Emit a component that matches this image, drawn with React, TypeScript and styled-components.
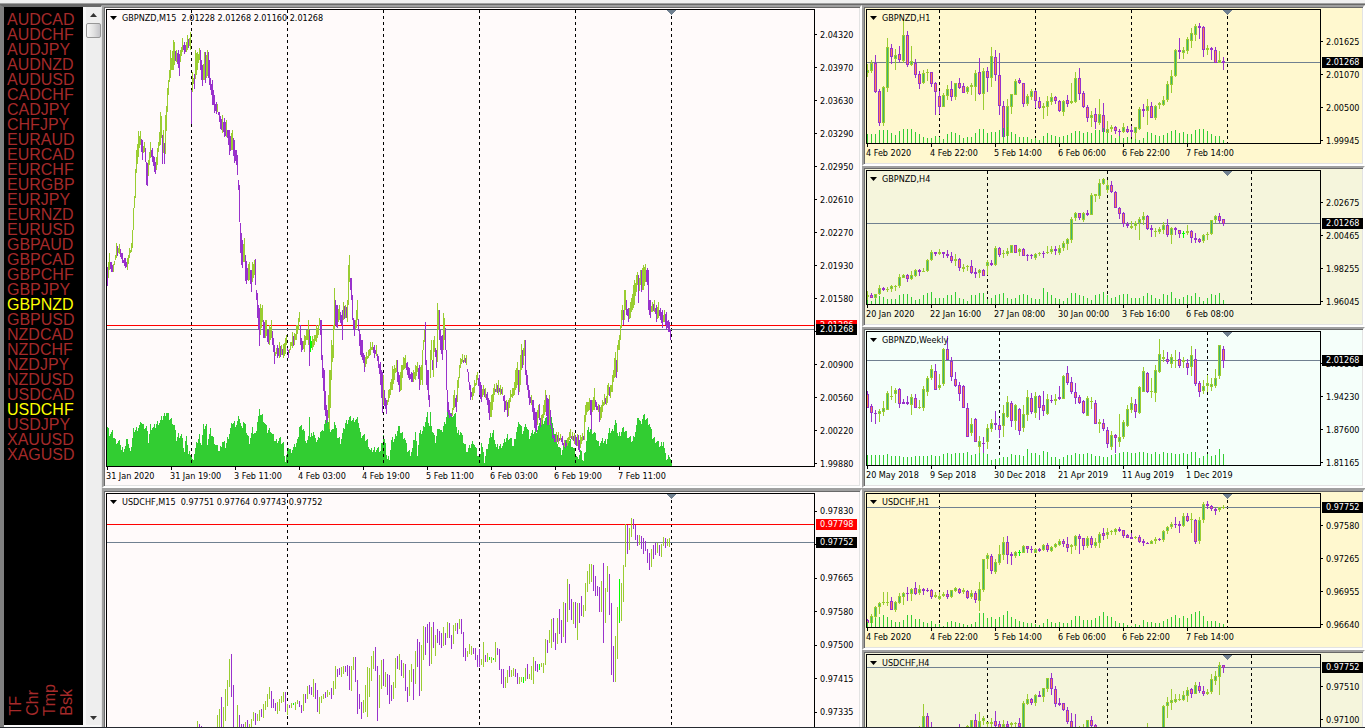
import React from "react";
import styled, { createGlobalStyle, css } from "styled-components";

const UP = "#9acd32";
const DOWN = "#9932cc";
const DOJI = "#00ff00";
const VOLUME = "#32cd32";
const PRICE_LINE = "#708090";

const GlobalStyle = createGlobalStyle`
  * { box-sizing: border-box; }
  body {
    margin: 0;
    background: #f0f0f0;
    color: #000;
    font: 9px/12px "DejaVu Sans Condensed", "DejaVu Sans", sans-serif;
  }
`;

/* ---------- data ---------- */

type Tone = "g" | "p" | "l";
const toneColor: Record<Tone, string> = { g: UP, p: DOWN, l: DOJI };

// Each candle: high, body top, body bottom, low (in thirds of a pixel) and tone.
const gbpH1 = `193,210,220,230g 180,190,212,219g 165,190,275,279p 266,273,368,378p 258,261,368,378g 114,141,264,275g
132,144,170,192p 146,165,176,209g 137,163,180,185p 57,105,182,188g 93,105,195,200p 138,182,195,197g 178,190,224,235p
213,222,251,266p 209,219,249,252g 207,215,220,243g 215,217,251,261p 245,250,276,344p 272,288,322,342p 280,284,322,322g
255,267,287,300g 243,266,290,302p 248,249,290,299g 234,249,264,267p 248,258,278,278p 257,261,276,282g 248,256,262,285g
211,219,261,302g 174,215,282,286p 204,213,281,329g 200,214,234,276p 141,168,234,262g 150,170,225,243p 159,225,318,345p
303,318,410,413p 298,317,408,411g 282,283,322,342g 237,243,284,284g 234,240,250,251p 249,249,313,320p 283,287,313,317g
267,273,290,300g 271,272,303,323p 290,303,323,327p 309,318,324,356g 288,302,321,349g 279,290,305,314g 288,291,302,312p
299,303,334,337p 299,303,336,349g 285,300,312,322p 249,303,310,313g 217,234,305,308g 204,235,282,300p 273,280,322,325p
314,321,355,366p 333,344,355,380g 323,343,367,388p 296,343,370,375g 309,345,397,400p 364,388,398,400g 375,381,388,395g
378,381,393,402p 388,393,395,411p 370,380,395,400g 378,387,395,398p 377,389,396,410p 380,380,400,418g 322,327,387,390g
312,326,332,351p 297,318,332,375g 307,318,353,354p 315,318,353,360g 305,309,316,327g 288,300,314,317g 243,252,300,305g
210,228,254,279g 148,150,228,230g 114,150,157,177p 141,150,158,178g 111,117,152,162g 84,99,122,144g 72,78,104,123g
69,78,84,117p 78,81,150,171p 135,144,150,165g 141,143,150,180p 141,150,188,189p 153,181,188,190g 171,183,188,210p`;

const gbpH4 = `378,390,397,405g 384,390,399,400p 388,388,400,410g 360,370,388,390g 365,370,375,378p 366,371,375,381g
360,363,373,381g 360,362,364,378g 328,336,362,370g 326,330,338,340g 326,330,342,350p 318,330,342,344g 311,315,333,336g
312,315,321,333p 308,318,320,322g 283,286,318,320g 255,262,286,288g 261,262,266,273p 253,261,266,270g 261,262,268,279p
255,267,274,278p 261,273,288,294p 267,283,288,303g 280,283,308,318p 297,306,313,320g 300,304,307,318g 286,303,324,328p
308,320,326,339p 312,315,324,339g 312,316,332,334p 285,292,304,330g 285,294,300,303p 244,250,300,302g 247,250,270,275p
255,263,268,280g 250,258,266,272g 240,241,263,265g 240,241,264,264p 249,252,262,273g 250,252,272,273p 268,270,272,288p
268,270,272,282p 264,268,278,284g 260,264,268,272g 258,264,266,279p 244,262,265,267g 243,252,262,266g 243,252,258,270p
240,249,265,270g 228,234,249,258g 220,222,236,255g 156,162,224,234g 141,144,160,167g 144,144,158,164p 141,144,165,171g
135,144,150,152p 85,90,150,150g 87,88,92,111g 42,54,92,102g 39,42,56,60g 45,61,75,85g 48,60,80,84p 78,80,128,129p
125,128,147,162p 141,145,177,186p 171,177,183,189p 168,183,188,192g 168,173,183,195g 155,163,175,225g 141,153,165,180g
150,153,191,195p 180,190,196,215p 188,198,202,215g 186,192,202,208g 171,179,194,208g 162,180,209,215p 186,188,209,237g
186,190,196,209p 195,196,206,218p 198,204,206,218l 180,199,204,210g 195,198,220,234p 204,220,224,233p 220,221,232,234p
208,210,228,234g 200,206,210,225g 165,166,208,210g 150,153,166,174g 144,153,167,174p 162,163,176,182p`;

const gbpWeekly = `198,207,248,250p 237,243,264,291p 255,264,267,297p 252,259,268,290g 228,249,260,273g 198,204,254,256g
183,213,215,225g 190,195,207,234g 190,193,236,249p 222,231,236,238p 213,231,237,240p 207,215,240,270g 208,218,248,249p
224,246,249,251g 183,193,249,257g 152,159,200,212g 120,132,160,165g 117,138,194,195p 147,180,188,194g 69,72,177,183g
34,72,104,106p 96,107,156,168p 140,163,182,185p 170,180,206,227p 180,183,248,249p 235,248,335,336p 279,296,324,333g
280,283,350,351p 332,347,366,386g 336,353,356,384p 297,309,350,372g 282,294,312,320g 258,293,299,315p 279,299,315,338p
240,264,304,336g 213,231,275,279g 228,233,288,305p 237,240,288,315g 249,252,317,330p 240,267,308,320g 195,216,270,287g
203,219,261,266p 200,213,265,280g 210,213,248,285p 197,241,258,273p 207,222,267,270g 210,225,228,234p 207,221,227,240g
183,216,222,224p 150,153,221,222g 123,144,174,180p 156,171,202,208p 174,202,219,236p 210,217,234,237p 225,227,264,266p
213,219,273,274g 216,228,230,252g 225,234,297,298p 282,292,296,324g 282,294,312,318p 306,314,358,368p 318,329,365,374g
327,330,338,384p 267,336,350,366g 285,291,335,342g 240,251,303,306g 215,234,256,264g 222,237,261,279p 183,186,264,266g
126,138,200,200g 141,144,201,204p 159,198,202,218g 120,135,204,231g 42,87,141,144g 75,97,102,110g 80,102,111,117p
87,97,116,129g 75,105,107,129g 81,102,123,130p 96,105,110,129g 102,115,129,150p 63,90,126,153g 72,102,178,182p
168,174,202,216p 165,183,198,208g 150,174,184,200g 160,176,186,198g 132,160,184,190g 60,61,154,162g 63,72,107,129p`;

const chfH1 = `402,404,413,415p 387,393,414,416g 362,366,396,407g 352,354,367,388g 321,350,353,360g 321,350,352,362g
336,348,374,376p 348,352,374,380g 323,333,354,356g 322,325,336,360g 306,324,328,347p 309,312,328,348g 291,309,327,329p
300,313,325,330g 308,312,318,330p 309,314,317,321p 313,316,336,342p 322,330,336,338g 320,333,343,345g 322,327,334,336g
315,327,336,342p 314,316,336,338g 305,309,317,321g 309,311,324,327p 309,316,321,327g 315,318,339,342p 316,323,336,342g
318,324,346,354p 291,313,347,377g 222,222,315,320g 204,211,223,251g 207,213,258,267p 222,231,260,266g 180,208,234,239g
155,172,210,226g 153,172,210,237p 201,207,212,240p 198,202,214,220g 195,200,205,212l 180,183,203,204g 182,183,193,204p
183,192,196,204p 188,192,203,204g 190,191,197,200p 177,180,195,197g 174,180,196,200p 182,185,198,200g 174,178,186,190g
162,168,180,183g 162,168,178,186p 155,177,188,200p 178,180,186,207g 150,153,183,195g 147,154,162,207p 158,159,183,195p
153,158,182,190g 153,158,181,188p 160,171,182,190g 141,147,174,188g 129,144,153,165p 129,141,150,162g 135,138,142,150g
130,132,140,150g 126,133,138,140p 135,136,152,160p 148,150,158,160p 143,155,161,163p 153,156,160,162g 150,156,171,174p
162,168,174,183p 171,173,177,178p 165,167,176,177g 155,162,168,177g 158,162,165,168p 135,138,165,170g 123,126,138,147g
111,117,126,132g 96,117,120,130p 108,118,122,143p 84,93,123,127g 84,93,108,111p 84,102,106,145g 102,104,171,177p
96,105,168,177g 51,57,105,113g 48,57,62,72p 60,63,72,78p 69,72,77,90p 66,67,74,80g 60,65,68,72g`;

const chfH4 = `- - - - - - - - - - - - - 723,726,800,800g 657,693,800,800g 684,693,800,800p 711,725,800,800p - - - - - -
717,726,800,800p - 720,722,800,800g 705,706,800,800g 687,706,800,800p 681,708,800,800g 693,699,709,720g 710,712,716,726g
699,711,716,800g 678,708,722,726p 708,718,800,800p 706,717,726,800g 709,717,726,800p 712,715,720,800g 710,714,718,800g
699,713,726,800p 648,654,800,800g 627,642,656,661g 639,642,653,660p 627,630,653,662g 618,630,635,636p 608,610,635,650g
578,580,612,620g 563,580,612,630p 603,612,656,666p 640,654,659,662p 653,655,676,678p 666,675,710,718p 684,708,800,800p
687,726,800,800p 723,726,800,800g 717,726,800,800g 704,706,800,800g 693,706,722,728p 717,720,800,800p - - - - - - - - - - - -
714,728,800,800g - - - 661,664,800,800g 636,652,662,699g 612,645,653,675g 628,643,650,655g 628,642,646,648g
618,630,645,647g 606,614,632,651g 610,613,626,640p 591,600,626,628g 591,602,617,623p 603,617,626,632p 613,620,627,630g
567,582,620,626g 558,573,588,600g 530,541,575,630g 540,541,548,563p`;

const list = (s: string) => s.trim().split(/\s+/).map(Number);

const gbpH1Vol = list(`9 9 9 13 13 13 10 8 12 14 14 14 11 9 6 5 5 7 6 4 9 11 10 8 5 6 6 10 14 14 10 11 11 13 15 16 11 9 6 6 6 4
5 3 7 10 8 7 6 7 8 10 12 12 10 11 10 13 13 15 10 8 5 7 5 6 4 4 3 5 11 10 8 7 8 10 12 13 10 11 9 9 13 14 14 12 9 7 7 3 3`);
const gbpH4Vol = list(`4 3 5 8 7 5 5 5 9 10 10 7 4 5 9 11 12 6 6 6 9 9 12 6 5 3 9 9 11 11 5 6 9 10 11 6 5 6 9 10 9 6 5 5 16 12 9 6
5 3 6 11 11 9 8 6 4 9 10 12 9 6 7 9 10 10 6 6 6 8 11 9 6 5 10 9 12 6 5 7 9 8 11 7 3 6 10 9 11 4`);
const gbpWeeklyVol = list(`10 10 10 10 10 11 9 9 9 8 8 8 9 9 9 9 10 9 9 11 12 11 12 12 12 13 10 11 12 12 11 5 6 7 8 8 11 10 10 9
16 12 12 10 14 13 8 8 6 8 10 10 12 11 11 12 11 9 9 8 8 10 11 12 13 13 12 12 13 13 12 11 13 11 13 12 12 11 11 12 11 13 13 7
9 11 9 10 16 11`);
const chfH1Vol = list(`5 7 9 10 12 10 7 5 5 7 12 12 8 8 5 4 6 3 3 1 5 6 5 4 3 2 3 5 14 14 9 10 8 10 12 16 10 8 6 5 4 4 3 2 4 8 5 4
5 4 4 7 11 11 7 7 7 9 11 15 11 10 6 4 4 2 1 3 2 7 5 5 4 4 6 8 10 12 9 11 9 13 15 16 11 6 6 6 4 3`);

// GBPNZD M15 key points: x, top and bottom of the bar; points between are interpolated.
const gbpM15 = `107,267,286 109,253,270 111,262,272 113,264,272 116,243,258 119,244,254 122,253,263 125,258,268 127,258,270
129,248,258 131,243,252 132,230,248 133,208,230 134,196,208 135,169,198 136,150,173 138,131,157 140,131,145 142,140,160
144,142,152 145,148,162 146,162,185 147,163,186 149,152,165 150,142,158 152,148,162 154,157,172 155,162,174 157,148,165
158,142,152 160,112,145 161,116,138 162,135,164 163,130,153 164,143,164 165,115,154 167,88,112 168,80,95 169,70,82
170,50,78 171,58,70 173,40,70 174,42,65 176,50,62 178,50,68 179,54,76 180,50,62 182,38,52 184,42,54 186,42,52 187,35,50
189,38,46 190,32,50 191,90,124 192,72,92 193,78,84 194,74,89 195,50,79 197,52,70 199,48,60 200,50,70 201,60,80 202,65,86
204,52,80 205,52,83 207,50,76 208,52,78 209,60,85 210,78,90 212,80,105 213,90,105 214,95,113 216,102,114 217,104,112
219,112,122 220,116,129 222,115,133 224,118,137 226,120,137 228,130,145 229,130,155 231,133,150 232,130,150 234,140,163
236,150,165 237,155,175 238,180,190 239,185,222 240,223,253 241,233,265 242,240,268 244,238,262 245,255,281 246,261,284
248,264,281 249,262,280 251,270,292 252,262,282 254,260,275 255,259,285 256,290,300 257,293,318 259,308,346 260,304,335
262,305,322 263,320,338 265,320,338 266,320,336 267,330,342 269,325,345 271,320,338 273,338,352 274,345,364 276,348,354
277,345,358 279,342,358 281,345,355 283,344,358 285,338,354 286,335,345 288,350,358 290,342,350 292,332,348 294,333,345
296,325,340 298,318,330 299,312,322 300,325,345 301,338,352 304,335,352 306,330,340 308,320,345 309,330,366 310,336,352
312,336,350 314,335,345 316,325,342 318,325,335 319,318,326 320,320,335 321,320,360 322,355,378 324,370,410 326,405,423
327,410,420 328,395,418 329,370,429 330,370,408 331,340,380 332,345,362 333,325,358 334,288,330 335,300,325 337,305,328
339,305,320 341,315,325 342,310,340 343,302,320 345,305,318 347,300,322 348,265,305 349,255,282 350,278,290 351,278,300
352,295,320 353,318,330 354,320,336 356,310,328 357,300,320 359,330,346 360,334,355 362,340,360 364,355,372 366,352,364
368,350,358 370,342,355 372,342,350 374,345,358 376,345,356 378,356,368 380,362,385 382,372,413 383,375,405 384,390,406
386,400,414 388,390,402 390,382,395 392,366,390 394,365,380 396,360,372 397,360,382 399,375,392 401,365,390 403,357,370
405,355,368 407,362,375 409,368,380 411,372,382 413,370,382 415,365,380 417,362,372 419,365,390 421,365,380 422,350,385
423,340,350 424,330,342 425,322,365 426,360,385 428,370,400 429,395,407 430,350,378 431,340,360 432,360,370 433,340,377
434,336,352 436,350,368 437,303,362 438,310,330 439,310,340 440,330,350 442,335,360 443,313,350 444,318,340 445,328,350
446,350,390 447,390,412 449,410,418 452,408,416 453,395,410 454,390,408 456,395,412 457,380,402 459,365,378 460,358,368
462,354,362 464,355,362 466,355,365 468,372,382 470,385,400 472,388,400 474,380,393 476,375,385 477,372,380 479,375,395
481,385,402 483,385,395 485,388,398 487,392,405 489,400,420 491,395,417 493,388,402 494,384,395 496,383,392 498,380,395
500,385,395 502,387,395 504,395,412 506,400,410 507,402,417 508,400,416 510,390,402 512,388,398 514,382,395 515,370,390
517,362,385 518,370,395 519,370,392 520,355,385 521,344,370 522,350,368 523,348,365 524,340,356 525,340,375 526,370,385
527,375,390 529,390,405 531,395,405 532,400,412 533,400,420 534,408,428 535,412,430 536,412,432 537,410,425 538,405,418
539,404,420 540,418,427 541,415,425 543,405,418 545,390,412 546,395,416 547,398,425 549,395,425 550,410,425 552,428,438
554,435,442 556,432,442 558,432,444 560,434,440 562,436,445 564,440,447 565,440,448 567,438,446 569,432,440 570,429,438
572,432,440 574,433,444 575,435,445 577,434,446 578,435,450 579,440,452 580,435,448 582,433,441 583,436,440 584,415,440
585,405,422 586,402,415 587,402,412 589,398,410 590,400,415 591,400,430 592,400,412 594,388,410 596,402,410 598,404,412
599,405,422 601,405,418 602,400,412 604,394,405 606,396,405 607,385,403 608,383,395 610,385,398 612,375,392 613,370,382
614,358,378 615,352,377 616,360,378 617,345,372 618,340,350 619,335,350 620,325,340 621,310,328 622,305,320 623,310,325
624,290,320 625,290,310 626,300,315 628,308,322 630,302,318 631,298,312 633,285,308 634,280,305 636,275,292 637,272,285
638,275,303 640,270,285 641,270,292 642,268,290 643,265,290 645,264,282 647,268,285 648,270,310 649,300,315 650,300,318
652,302,312 654,300,312 656,305,322 658,302,318 660,308,320 662,310,328 664,310,322 666,312,330 668,320,332 669,322,332
670,330,340`;

const gbpM15Vol = `107,426 109,432 112,432 115,440 120,442 121,449 125,446 127,436 129,449 131,445 133,430 136,428 140,424
141,420 143,425 146,426 148,440 150,425 153,427 157,422 160,420 163,415 166,411 169,417 172,420 174,425 176,438 178,434
181,434 184,451 186,432 188,454 190,452 192,460 194,452 197,440 199,435 201,443 203,426 206,425 207,441 210,430 213,438
216,445 219,450 222,440 225,445 228,435 230,428 232,421 236,423 239,416 241,427 243,420 245,426 247,434 249,440 252,429
255,434 257,420 259,411 262,415 265,424 267,430 270,428 272,434 275,440 279,438 283,443 285,460 288,445 290,450 294,446
297,440 299,425 303,428 306,441 308,438 309,414 310,436 313,430 315,440 318,438 320,430 322,432 324,423 327,416 329,428
332,430 334,420 337,435 340,440 343,430 345,422 349,417 352,419 355,418 358,420 360,433 363,435 367,440 370,450 374,448
377,448 380,450 383,433 385,445 387,458 389,456 391,440 394,438 396,432 398,426 401,432 404,436 407,449 410,452 412,448
415,431 417,452 419,433 422,430 425,420 427,414 429,425 430,413 432,430 435,440 438,425 441,432 443,425 445,420 447,410
449,415 452,413 455,415 457,432 460,430 463,440 467,450 470,445 473,440 476,450 479,458 481,441 484,460 487,445 490,435
493,431 496,447 499,445 503,443 507,435 510,438 513,445 516,430 519,421 522,430 526,424 529,435 532,432 535,430 539,425
541,422 545,418 548,420 551,415 553,430 556,434 558,445 561,452 563,445 566,440 570,440 574,450 577,458 580,450 583,460
585,448 587,430 590,428 594,432 598,442 602,440 606,440 609,430 612,430 615,420 618,435 622,428 625,430 628,436 632,440
635,430 638,415 640,422 643,415 646,418 649,422 652,436 656,440 660,445 663,440 665,455 667,458 669,453 671,460`;

// USDCHF M15 bars, one every two pixels: high, low (thirds of a pixel) and tone.
const chfM15 = [
  {
    start: 90,
    shift: 198,
    bars: `483,530g 492,530p 498,530p - - - - - - - 465,530g 447,530g 411,530p 441,530g 387,483g 360,438g 297,381g 282,411p
375,530p - 435,530g 465,530p 492,530p 492,530p 486,530g 480,530p 492,530g 477,530g 456,483g 459,495p 462,483g 450,483g
447,471p 432,474g 423,450g 402,441g 381,417g 393,444p 417,444p 429,453p 426,462g 417,453g 408,429g 396,426g 396,456p
432,465g 435,444p 429,444g 429,435l 426,450g 420,432g 423,441p 435,459p 402,453g 402,429p 378,417g 375,402p 381,405p
357,411g 369,417p 390,456p 411,462g 408,429g 402,417g 396,414p 390,411g 396,405g 384,417p 363,405g 318,387g 327,351p
324,345p`,
  },
  {
    start: 234,
    shift: 318,
    bars: `201,231g 198,222g 198,216p 195,228p 198,270p 198,273g 171,210g 171,246p 240,342p 282,327p 306,357p 300,339g
255,336g 201,351g 204,291g 168,243g 153,207g 141,213p 198,363p 225,324g`,
  },
  {
    start: 274,
    shift: -12,
    bars: `510,597g 507,588p 546,591g 552,615p 555,642p 585,633p 576,627g 504,594g 498,537p 492,540g 510,558p 519,564g
522,603p 591,636p 540,618g 522,576g 537,630p 483,582g 447,531p 456,618p 465,603g 408,510g 411,495p 402,459p 396,528p
411,522g 396,474p 435,498g 417,459p 423,465p 429,474p 411,468g 429,465p 396,444g 399,444p 435,477p 405,462g 399,423g
399,432p 387,417g 387,432p 426,501p 474,513p 483,501g 462,492g 468,495g 474,492p 474,510p 495,531p 477,531p 507,525g
456,531g 495,516p 489,516g 501,510l 501,519g 504,510l 456,516g 474,495p 477,540p 537,582p 537,594p 561,594g 540,579g
528,561p 540,561g 534,558g 537,561p 549,582p 561,582g 561,576g 561,579l 534,573g 522,567p 552,567g 528,570g 501,582g
513,543p 522,546p 522,540l 519,531g 519,549g 447,525g 450,489p 420,459g 387,474g 384,456p 429,480p 384,462g 357,432p
390,459p 336,441g 339,459p 267,396g 282,360p 327,390p 336,402g 336,414p 339,450g 339,399p 318,378p 345,381g 279,363g
243,306g 222,282g 222,276g 225,303p 258,318p 288,318p 291,366p 273,366g 219,459p 294,399g 228,306g 252,375p 339,555p
468,576p 438,576g 351,507g 267,399l 279,393g 225,336g 102,231g 105,192p 114,180g 84,141g 87,117p 105,150p 135,168p
135,165g 138,177p 144,192p 153,183p 177,219p 189,240p 177,231g 165,207p 159,195p 159,189g 165,198p 162,201g 141,168g
144,174p 147,168g 144,171g`,
  },
];

const pairs = (
  "AUDCAD AUDCHF AUDJPY AUDNZD AUDUSD CADCHF CADJPY CHFJPY EURAUD EURCAD EURCHF EURGBP EURJPY EURNZD EURUSD " +
  "GBPAUD GBPCAD GBPCHF GBPJPY GBPNZD GBPUSD NZDCAD NZDCHF NZDJPY NZDUSD USDCAD USDCHF USDJPY XAUUSD XAGUSD"
).split(" ");

/* ---------- drawing ---------- */

function Candles({ data, shift }: { data: string; shift: number }) {
  const y = (v: string) => Math.round(Number(v) / 3) + shift;
  return (
    <>
      {data.trim().split(/\s+/).map((item, i) => {
        if (item === "-") return null;
        const tone = item.slice(-1) as Tone;
        const [h, t, b, l] = item.slice(0, -1).split(",").map(y);
        const size = Math.max(1, b - t);
        const x = i * 4;
        const color = toneColor[tone];
        return (
          <g key={i}>
            <rect x={x} y={h} width={1} height={Math.max(1, l - h)} fill={color} />
            <rect x={x - 1} y={t} width={3} height={size} fill={color} />
            {size > 2 && (
              <rect x={x} y={t + 1} width={1} height={size - 2} fill={tone === "g" ? "#3cb371" : "#ff7f50"} />
            )}
          </g>
        );
      })}
    </>
  );
}

function VolumeTicks({ data, floor }: { data: number[]; floor: number }) {
  return (
    <>
      {data.slice(0, 90).map((v, i) => (
        <rect key={i} x={i * 4} y={floor - v} width={1} height={v} fill={VOLUME} />
      ))}
    </>
  );
}

const points = (s: string) => s.trim().split(/\s+/).map((p) => p.split(",").map(Number));

function DenseBars() {
  const keys = points(gbpM15);
  const bars: { x: number; hi: number; lo: number }[] = [];
  keys.forEach(([x, hi, lo], i) => {
    bars.push({ x, hi, lo });
    const next = keys[i + 1];
    if (!next) return;
    for (let k = x + 1; k < next[0]; k++) {
      const f = (k - x) / (next[0] - x);
      const top = Math.round(hi + (next[1] - hi) * f) + 2 + ((k * 37) % 4);
      const bottom = Math.round(lo + (next[2] - lo) * f) - ((k * 53) % 4);
      bars.push({ x: k, hi: top, lo: Math.max(top + 3, bottom) });
    }
  });
  return (
    <>
      {bars.map((b, i) => {
        const prev = bars[i - 1] ?? { x: 0, hi: 0, lo: 0 };
        const tone: Tone = b.x === 310 || b.x === 311 ? "l" : b.hi + b.lo > prev.hi + prev.lo ? "p" : "g";
        return <rect key={b.x} x={b.x - 107} y={b.hi - 10} width={1} height={b.lo - b.hi} fill={toneColor[tone]} />;
      })}
    </>
  );
}

function DenseVolume() {
  const keys = points(gbpM15Vol);
  let d = "M0 456";
  keys.forEach(([x, top], i) => {
    const end = keys[i + 1]?.[0] ?? x + 1;
    for (let k = x; k < end; k++) {
      const f = (k - x) / (end - x);
      const y = Math.round(top + ((keys[i + 1]?.[1] ?? top) - top) * f) + ((k * 5) % 7) - 12;
      d += `V${Math.min(454, y)}H${k - 106}`;
    }
  });
  return <path d={d + "V456Z"} fill={VOLUME} />;
}

function ThinBars() {
  return (
    <>
      {chfM15.map((run) =>
        run.bars.trim().split(/\s+/).map((item, i) => {
          if (item === "-") return null;
          const [h, l] = item.slice(0, -1).split(",").map((v) => Math.round((Number(v) + run.shift) / 3));
          const x = run.start + i * 2;
          return <rect key={x} x={x} y={h} width={1} height={l - h} fill={toneColor[item.slice(-1) as Tone]} />;
        }),
      )}
    </>
  );
}

/* ---------- windows ---------- */

const Frame = styled.section<{ $bg: string; $tall?: boolean }>`
  display: grid;
  grid-template-columns: minmax(0, 1fr) ${(p) => (p.$tall ? 45 : 42)}px;
  grid-template-rows: ${(p) => (p.$tall ? 458 : 135)}px 1fr;
  height: ${(p) => (p.$tall ? 483 : 161)}px;
  flex: none;
  padding: 2px 0 0 2px;
  border: 2px solid;
  border-color: #a0a0a0 #fff #fff #a0a0a0;
  box-shadow: inset 1px 1px #696969, inset -1px -1px #e3e3e3;
  background: ${(p) => p.$bg};
  overflow: hidden;
`;

const Plot = styled.div`
  position: relative;
  border: 1px solid #000;
`;

const Canvas = styled.svg`
  display: block;
  width: 100%;
  height: 100%;
  shape-rendering: crispEdges;
`;

const Caption = styled.header`
  position: absolute;
  top: 2px;
  left: 3px;
  display: flex;
  align-items: center;
  gap: 5px;
  white-space: pre;
`;

const MenuButton = styled.button`
  display: flex;
  padding: 0;
  border: 0;
  background: none;
`;

const Title = styled.h2`
  margin: 0;
  font: inherit;
`;

const Scale = styled.ol<{ $top: number }>`
  list-style: none;
  margin: 0;
  padding: ${(p) => p.$top}px 0 0;
  position: relative;
`;

const Price = styled.li<{ $tall?: boolean }>`
  display: flex;
  align-items: center;
  gap: 3px;
  height: ${(p) => (p.$tall ? 34 : 33)}px;
  &:nth-child(even) { height: 33px; }
  &::before {
    content: "";
    width: 2px;
    height: 1px;
    background: #000;
  }
`;

const Tag = styled.li<{ $y: number; $red?: boolean }>`
  position: absolute;
  top: ${(p) => p.$y}px;
  left: 1px;
  width: 41px;
  height: 11px;
  padding-left: 4px;
  line-height: 11px;
  color: #fff;
  background: ${(p) => (p.$red ? "#f00" : "#000")};
`;

const Times = styled.ol`
  grid-column: 1 / -1;
  list-style: none;
  margin: 0;
  padding: 0;
  display: flex;
`;

const Time = styled.li`
  flex: 0 0 64px;
  white-space: nowrap;
  &::before {
    content: "";
    display: block;
    width: 1px;
    height: 3px;
    margin-left: 1px;
    background: #000;
  }
`;

type ChartProps = {
  title: string;
  bg: string;
  tall?: boolean;
  scaleTop: number;
  stretched?: boolean;
  prices: string[];
  tags: { y: number; text: string; red?: boolean }[];
  lines: { y: number; red?: boolean }[];
  seps: number[];
  shift: number;
  times?: string[];
  under?: React.ReactNode;
  children: React.ReactNode;
};

function Chart(p: ChartProps) {
  return (
    <Frame $bg={p.bg} $tall={p.tall} aria-label={p.title}>
      <Plot>
        <Canvas role="img" aria-label={`${p.title} price chart`}>
          {p.under}
          {p.seps.map((x) => (
            <line key={x} x1={x + 0.5} x2={x + 0.5} y1="0" y2="100%" stroke="#000" strokeDasharray="3 3" />
          ))}
          {p.lines.map((l) => (
            <rect key={l.y} x="0" y={l.y} width="100%" height="1" fill={l.red ? "#f00" : PRICE_LINE} />
          ))}
          {p.children}
          <path d={`M${p.shift - 4} 0h9v1h-1v1h-1v1h-1v1h-1v1h-1v-1h-1v-1h-1v-1h-1v-1h-1z`} fill={PRICE_LINE} />
        </Canvas>
        <Caption>
          <MenuButton type="button" aria-label={`${p.title} trading panel`}>
            <svg width="7" height="4" aria-hidden="true">
              <path d="M0 0h7L3.5 4z" />
            </svg>
          </MenuButton>
          <Title>{p.title}</Title>
        </Caption>
      </Plot>
      <Scale $top={p.scaleTop}>
        {p.prices.map((v) => (
          <Price key={v} $tall={p.stretched}>{v}</Price>
        ))}
        {p.tags.map((t) => (
          <Tag key={t.text} $y={t.y} $red={t.red}>{t.text}</Tag>
        ))}
      </Scale>
      {p.times && (
        <Times>
          {p.times.map((t) => (
            <Time key={t}>{t}</Time>
          ))}
        </Times>
      )}
    </Frame>
  );
}

/* ---------- page ---------- */

const Page = styled.main`
  display: grid;
  grid-template-rows: 3px minmax(0, 1fr) 1px;
  height: 100vh;
  overflow: hidden;
`;

const Strip = styled.div<{ $dark?: boolean }>`
  background: ${(p) => (p.$dark ? "#262a30" : "#f0f0f0")};
`;

const Workspace = styled.div`
  display: grid;
  grid-template-columns: 102px minmax(0, 760fr) minmax(0, 503fr);
  border-top: 1px solid #a0a0a0;
  box-shadow: inset 0 1px #696969;
  padding-top: 1px;
  min-height: 0;
`;

const Column = styled.div`
  display: flex;
  flex-direction: column;
  min-height: 0;
  overflow: hidden;
`;

const Divider = styled.div`
  flex: none;
  height: 1px;
  background: #a0a0a0;
`;

const Watch = styled.aside`
  display: grid;
  grid-template-columns: 79px 3px 15px;
  min-height: 0;
  padding: 0 0 2px;
  border: solid #a0a0a0;
  border-width: 2px 1px 0 4px;
  border-color: #696969 #e3e3e3 #fff #808080;
  background: #f8f8f8;
`;

const Panel = styled.div`
  display: flex;
  flex-direction: column;
  justify-content: space-between;
  min-height: 0;
  background: #000;
  font: 16px/15px "Liberation Sans", Arial, sans-serif;
`;

const PairList = styled.ul`
  list-style: none;
  margin: 0;
  padding: 5px 0 0 3px;
`;

const linkLike = css`
  display: block;
  padding: 0;
  border: 0;
  background: none;
  font: inherit;
  text-align: left;
`;

const PairButton = styled.button<{ $on: boolean }>`
  ${linkLike}
  color: ${(p) => (p.$on ? "#ff0" : "#a52a2a")};
`;

const Tools = styled.div`
  display: flex;
  align-items: flex-end;
  padding: 0 0 9px 3px;
`;

const Tool = styled.button`
  ${linkLike}
  color: #a52a2a;
  line-height: 17px;
  writing-mode: vertical-rl;
  transform: rotate(180deg);
`;

const ScrollBar = styled.div`
  grid-column: 3;
  display: flex;
  flex-direction: column;
  background: #eee;
`;

const Arrow = styled.button<{ $end?: boolean }>`
  display: flex;
  justify-content: center;
  align-items: center;
  height: 15px;
  padding: 0;
  border: 0;
  background: none;
  margin-top: ${(p) => (p.$end ? "auto" : "0")};
`;

const Thumb = styled.div`
  height: 15px;
  margin-top: 1px;
  border: 1px solid #979797;
  border-radius: 2px;
  background: linear-gradient(90deg, #f7f7f7, #e2e2e2 50%, #c4c4c8);
`;

const h1Times = ["4 Feb 2020", "4 Feb 22:00", "5 Feb 14:00", "6 Feb 06:00", "6 Feb 22:00", "7 Feb 14:00"];
const h4Times = ["20 Jan 2020", "22 Jan 16:00", "27 Jan 08:00", "30 Jan 00:00", "3 Feb 16:00", "6 Feb 08:00"];

export default function App() {
  return (
    <>
      <GlobalStyle />
      <Page>
        <Strip />
        <Workspace>
          <Watch aria-label="Symbols">
            <Panel>
              <PairList>
                {pairs.map((s) => (
                  <li key={s}>
                    <PairButton type="button" $on={s === "GBPNZD" || s === "USDCHF"}>{s}</PairButton>
                  </li>
                ))}
              </PairList>
              <Tools>
                {["TF", "Chr", "Tmp", "Bsk"].map((t) => (
                  <Tool type="button" key={t}>{t}</Tool>
                ))}
              </Tools>
            </Panel>
            <ScrollBar>
              <Arrow type="button" aria-label="Scroll up">
                <svg width="7" height="4" aria-hidden="true"><path d="M0 4h7L3.500 0z" fill="#333" /></svg>
              </Arrow>
              <Thumb />
              <Arrow type="button" aria-label="Scroll down" $end>
                <svg width="7" height="4" aria-hidden="true"><path d="M0 0h7L3.500 4z" fill="#333" /></svg>
              </Arrow>
            </ScrollBar>
          </Watch>

          <Column>
            <Chart
              title="GBPNZD,M15  2.01228 2.01268 2.01160 2.01268"
              bg="#fffafa"
              tall
              scaleTop={9}
              prices={["2.04320", "2.03970", "2.03630", "2.03290", "2.02950", "2.02610", "2.02270", "2.01930", "2.01580", "2.01240", "2.00900", "2.00560", "2.00220", "1.99880"]}
              tags={[{ y: 311, text: "2.01286", red: true }, { y: 315, text: "2.01268" }]}
              lines={[{ y: 315, red: true }, { y: 319 }]}
              seps={[84, 180, 276, 372, 468, 564]}
              shift={564}
              times={["31 Jan 2020", "31 Jan 19:00", "3 Feb 11:00", "4 Feb 03:00", "4 Feb 19:00", "5 Feb 11:00", "6 Feb 03:00", "6 Feb 19:00", "7 Feb 11:00"]}
              under={<DenseVolume />}
            >
              <DenseBars />
            </Chart>
            <Divider />
            <Chart
              title="USDCHF,M15  0.97751 0.97764 0.97743 0.97752"
              bg="#fffafa"
              tall
              scaleTop={1}
              stretched
              prices={["0.97830", "0.97745", "0.97665", "0.97580", "0.97500", "0.97415", "0.97335"]}
              tags={[{ y: 26, text: "0.97798", red: true }, { y: 44, text: "0.97752" }]}
              lines={[{ y: 30, red: true }, { y: 48 }]}
              seps={[180, 372, 564]}
              shift={564}
            >
              <ThinBars />
            </Chart>
          </Column>

          <Column>
            <Chart
              title="GBPNZD,H1"
              bg="#fff8cf"
              scaleTop={16}
              prices={["2.01625", "2.01070", "2.00500", "1.99945"]}
              tags={[{ y: 48, text: "2.01268" }]}
              lines={[{ y: 52 }]}
              seps={[72, 168, 264, 360]}
              shift={360}
              times={h1Times}
            >
              <Candles data={gbpH1} shift={-10} />
              <VolumeTicks data={gbpH1Vol} floor={133} />
            </Chart>
            <Chart
              title="GBPNZD,H4"
              bg="#f5f5dc"
              scaleTop={16}
              prices={["2.02675", "2.00465", "1.98255", "1.96045"]}
              tags={[{ y: 48, text: "2.01268" }]}
              lines={[{ y: 52 }]}
              seps={[120, 240, 384]}
              shift={360}
              times={h4Times}
            >
              <Candles data={gbpH4} shift={-6} />
              <VolumeTicks data={gbpH4Vol} floor={133} />
            </Chart>
            <Chart
              title="GBPNZD,Weekly"
              bg="#f5fffa"
              scaleTop={16}
              prices={["2.00865", "1.94230", "1.87600", "1.81165"]}
              tags={[{ y: 24, text: "2.01268" }]}
              lines={[{ y: 28 }]}
              seps={[132, 340]}
              shift={360}
              times={["20 May 2018", "9 Sep 2018", "30 Dec 2018", "21 Apr 2019", "11 Aug 2019", "1 Dec 2019"]}
            >
              <Candles data={gbpWeekly} shift={-7} />
              <VolumeTicks data={gbpWeeklyVol} floor={133} />
            </Chart>
            <Divider />
            <Chart
              title="USDCHF,H1"
              bg="#fff8cf"
              scaleTop={16}
              prices={["0.97580", "0.97265", "0.96955", "0.96640"]}
              tags={[{ y: 9, text: "0.97752" }]}
              lines={[{ y: 13 }]}
              seps={[72, 168, 264, 360]}
              shift={360}
              times={h1Times}
            >
              <Candles data={chfH1} shift={-9} />
              <VolumeTicks data={chfH1Vol} floor={133} />
            </Chart>
            <Chart
              title="USDCHF,H4"
              bg="#f5f5dc"
              scaleTop={16}
              prices={["0.97510", "0.97100"]}
              tags={[{ y: 8, text: "0.97752" }]}
              lines={[{ y: 12 }]}
              seps={[120, 240, 384]}
              shift={360}
            >
              <Candles data={chfH4} shift={-170} />
            </Chart>
          </Column>
        </Workspace>
        <Strip $dark />
      </Page>
    </>
  );
}
